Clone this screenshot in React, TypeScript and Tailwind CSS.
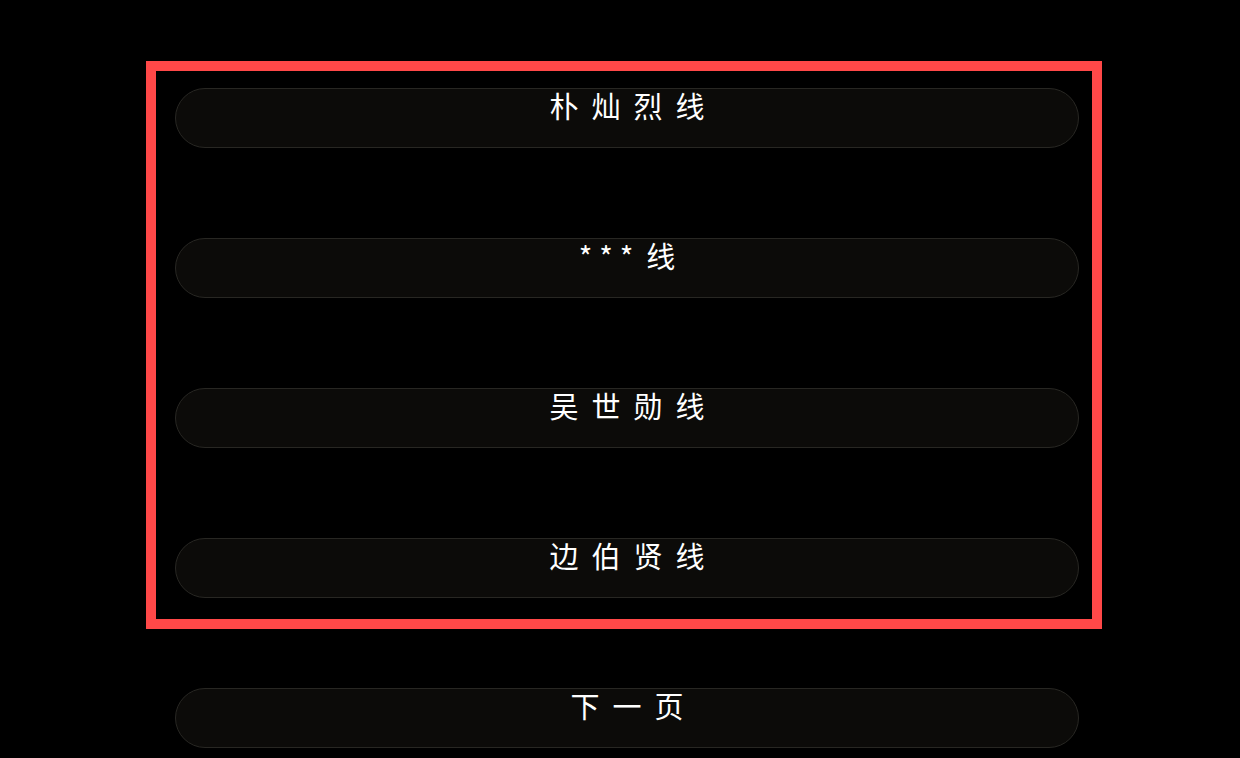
import React from "react";

const items = ["朴灿烈线", "***线", "吴世勋线", "边伯贤线", "下一页"];

export default function App() {
  return (
    <div className="relative w-[1240px] h-[758px] bg-black overflow-hidden" style={{ fontFamily: '"Noto Sans CJK SC", "Noto Sans", sans-serif' }}>
      <div className="flex flex-col gap-[90px] pt-[88px] pl-[175px]">
        {items.map((t) => (
          <div
            key={t}
            className="w-[904px] h-[60px] rounded-full bg-[#0c0b09] border border-[#282723] flex justify-center"
          >
            <span className="text-white text-[29px] leading-[32px] tracking-[13px] pl-[13px]">
              {t === "***线" ? (
                <>
                  <span className="tracking-[7px]">***</span>
                  <span className="pl-[6px]">线</span>
                </>
              ) : (
                t
              )}
            </span>
          </div>
        ))}
      </div>
      <div className="absolute left-[146px] top-[61px] w-[956px] h-[568px] border-[10px] border-[#ff4848] pointer-events-none" />
    </div>
  );
}
